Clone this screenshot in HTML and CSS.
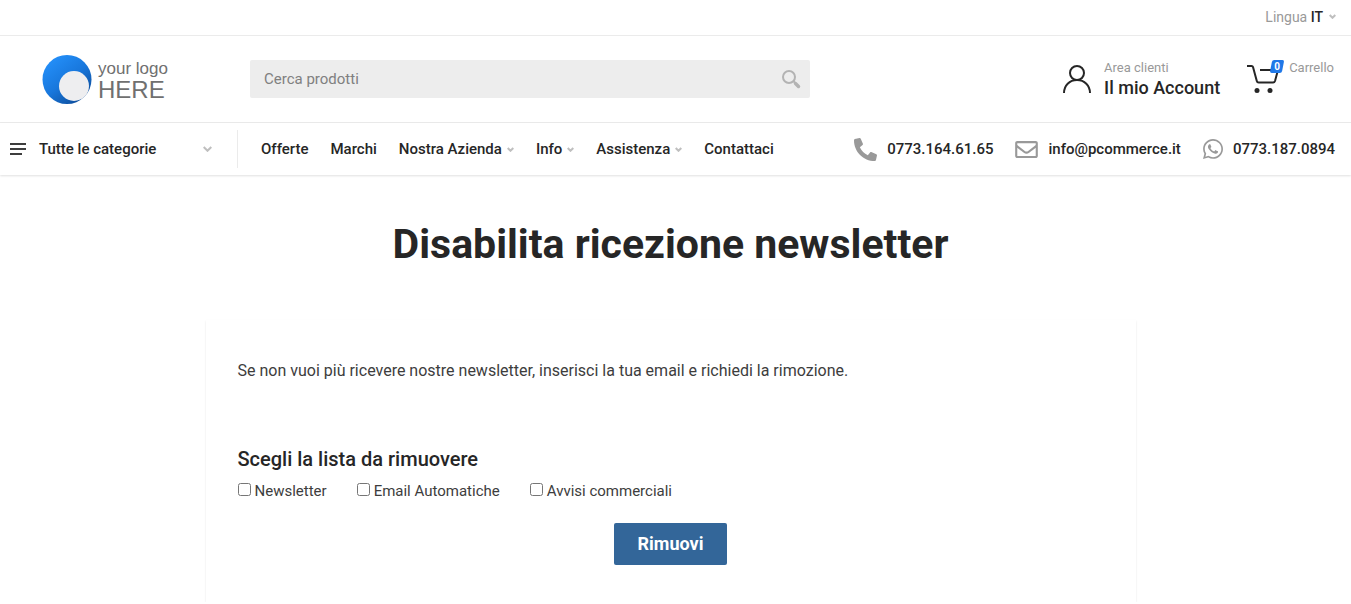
FILE: index.html
```html
<!DOCTYPE html>
<html lang="it">

<head>
    <meta charset="UTF-8" />
    <meta name="viewport" content="width=device-width, initial-scale=1.0" />
    <title>Disabilita ricezione newsletter</title>
    <link rel="stylesheet" href="styles.css">
</head>

<body>
    <header>
        <div class="topbar">
            <button type="button" class="language">
                <span>Lingua <b>IT</b></span>
                <svg class="arrow" viewBox="0 0 7 5" width="7" height="5"><path d="M.7 1l2.8 2.8L6.3 1" /></svg>
            </button>
        </div>

        <div class="header">
            <a href="#" class="logo">
                <svg viewBox="0 0 50 50" width="50" height="50">
                    <defs>
                        <linearGradient id="logoBlue" x1="0.1" y1="0.1" x2="0.8" y2="1">
                            <stop offset="0" stop-color="#2490fa" />
                            <stop offset="0.5" stop-color="#1877dc" />
                            <stop offset="1" stop-color="#0d4a96" />
                        </linearGradient>
                    </defs>
                    <circle cx="25" cy="25.500" r="24.500" fill="url(#logoBlue)" />
                    <circle cx="32" cy="32" r="15" fill="#eeeef0" />
                </svg>
                <span class="logo-text">
                    <span class="logo-small">your logo</span>
                    <span class="logo-big">HERE</span>
                </span>
            </a>

            <form class="search">
                <input type="text" placeholder="Cerca prodotti" aria-label="Cerca prodotti" />
                <button type="button" aria-label="Cerca">
                    <svg viewBox="0 0 20 20" width="20" height="20">
                        <circle cx="8" cy="8" r="6" fill="none" stroke="#b3b3b3" stroke-width="2" />
                        <path d="M12 12l2 1.500" stroke="#b3b3b3" stroke-width="2" />
                        <path d="M14.500 14.500l3 3" stroke="#b3b3b3" stroke-width="3.500" stroke-linecap="round" />
                    </svg>
                </button>
            </form>

            <a href="#" class="account">
                <svg viewBox="0 0 28 28" width="28" height="28" fill="none" stroke="#262626" stroke-width="2">
                    <circle cx="14" cy="8" r="7" />
                    <path d="M1 28c0-7.500 5.500-13 13-13s13 5.500 13 13" />
                </svg>
                <span class="account-text">
                    <span class="muted">Area clienti</span>
                    <span class="account-title">Il mio Account</span>
                </span>
            </a>

            <a href="#" class="cart">
                <span class="cart-icon">
                    <svg viewBox="0 0 32 28" width="32" height="28">
                        <path d="M0 1h4.500q1.200 0 1.500 1l3.800 14q.4 1.500 1.800 1.500h14.500q1.400 0 1.900-1.500L31 5H13" fill="none" stroke="#262626" stroke-width="2" stroke-linejoin="round" />
                        <circle cx="10" cy="25.500" r="2.500" fill="#262626" />
                        <circle cx="23" cy="25.500" r="2.500" fill="#262626" />
                    </svg>
                    <span class="badge">0</span>
                </span>
                <span class="muted">Carrello</span>
            </a>
        </div>

        <div class="navbar">
            <button type="button" class="categories">
                <svg viewBox="0 0 16 12" width="16" height="12" fill="#3d3d3d">
                    <path d="M0 0h16v2H0zM0 5h16v2H0zM0 10h12v2H0z" />
                </svg>
                <span>Tutte le categorie</span>
                <svg class="arrow" viewBox="0 0 9 6" width="9" height="6"><path d="M.7 1l3.800 3.800L8.300 1" /></svg>
            </button>

            <nav class="menu">
                <a href="#">Offerte</a>
                <a href="#">Marchi</a>
                <a href="#">Nostra Azienda <svg class="arrow" viewBox="0 0 7 5" width="7" height="5"><path d="M.7 1l2.800 2.800L6.300 1" /></svg></a>
                <a href="#">Info <svg class="arrow" viewBox="0 0 7 5" width="7" height="5"><path d="M.7 1l2.800 2.800L6.300 1" /></svg></a>
                <a href="#">Assistenza <svg class="arrow" viewBox="0 0 7 5" width="7" height="5"><path d="M.7 1l2.800 2.800L6.300 1" /></svg></a>
                <a href="#">Contattaci</a>
            </nav>

            <div class="contacts">
                <a href="tel:07731646165">
                    <svg viewBox="0 0 512 512" width="23" height="23" fill="#999">
                        <path transform="matrix(-1 0 0 1 512 0)" d="M493.400 24.600l-104-24c-11.300-2.600-22.900 3.300-27.500 13.900l-48 112c-4.200 9.800-1.400 21.300 6.900 28l60.600 49.600c-36 76.700-98.900 140.500-177.200 177.200l-49.600-60.600c-6.800-8.300-18.200-11.100-28-6.900l-112 48C3.900 366.500-2 378.100.6 389.400l24 104C27.100 504.200 36.700 512 48 512c256.100 0 464-207.500 464-464 0-11.200-7.700-20.900-18.600-23.400z" />
                    </svg>
                    0773.164.61.65
                </a>
                <a href="mailto:info@pcommerce.it">
                    <svg viewBox="0 64 512 384" width="23" height="17" fill="#999">
                        <path d="M464 64H48C21.490 64 0 85.490 0 112v288c0 26.510 21.490 48 48 48h416c26.510 0 48-21.490 48-48V112c0-26.510-21.490-48-48-48zm0 48v40.805c-22.422 18.259-58.168 46.651-134.587 106.490-16.841 13.247-50.201 45.072-73.413 44.701-23.208.375-56.579-31.459-73.413-44.701C106.180 199.465 70.425 171.067 48 152.805V112h416zM48 400V214.398c22.914 18.251 55.409 43.862 104.938 82.646 21.857 17.205 60.134 55.186 103.062 54.955 42.717.231 80.509-37.199 103.053-54.947 49.528-38.783 82.032-64.401 104.947-82.653V400H48z" />
                    </svg>
                    info@pcommerce.it
                </a>
                <a href="tel:07731870894">
                    <svg viewBox="0 32 448 448" width="20" height="20" fill="#999">
                        <path d="M380.900 97.100C339 55.100 283.200 32 223.900 32c-122.400 0-222 99.600-222 222 0 39.100 10.200 77.300 29.600 111L0 480l117.700-30.900c32.400 17.700 68.900 27 106.100 27h.1c122.300 0 224.100-99.600 224.100-222 0-59.300-25.200-115-67.100-157zm-157 341.600c-33.200 0-65.700-8.900-94-25.700l-6.700-4-69.800 18.300L72 359.200l-4.400-7c-18.500-29.400-28.200-63.300-28.200-98.200 0-101.700 82.800-184.500 184.600-184.500 49.300 0 95.600 19.200 130.400 54.100 34.800 34.900 56.200 81.200 56.100 130.500 0 101.800-84.900 184.600-186.600 184.600zm101.200-138.200c-5.500-2.800-32.800-16.200-37.900-18-5.100-1.900-8.800-2.800-12.500 2.800-3.700 5.600-14.300 18-17.600 21.800-3.200 3.700-6.500 4.200-12 1.400-32.600-16.300-54-29.100-75.500-66-5.700-9.800 5.700-9.100 16.300-30.300 1.800-3.700.9-6.900-.5-9.700-1.400-2.800-12.500-30.100-17.100-41.200-4.500-10.800-9.100-9.300-12.500-9.500-3.200-.2-6.900-.2-10.600-.2-3.700 0-9.700 1.400-14.800 6.900-5.100 5.600-19.400 19-19.400 46.300 0 27.300 19.900 53.700 22.600 57.400 2.800 3.700 39.100 59.700 94.800 83.800 35.200 15.200 49 16.500 66.600 13.900 10.700-1.600 32.800-13.400 37.400-26.400 4.600-13 4.600-24.100 3.200-26.400-1.300-2.500-5-3.900-10.500-6.600z" />
                    </svg>
                    0773.187.0894
                </a>
            </div>
        </div>
    </header>

    <main>
        <h1>Disabilita ricezione newsletter</h1>

        <form class="card">
            <p>Se non vuoi più ricevere nostre newsletter, inserisci la tua email e richiedi la rimozione.</p>
            <h2>Scegli la lista da rimuovere</h2>
            <div class="lists">
                <label><input type="checkbox" name="newsletter" />Newsletter</label>
                <label><input type="checkbox" name="automatiche" />Email Automatiche</label>
                <label><input type="checkbox" name="commerciali" />Avvisi commerciali</label>
            </div>
            <button type="button" class="remove">Rimuovi</button>
        </form>
    </main>
</body>

</html>
```

FILE: styles.css
```css
:root {
    --primary: #336699;
    --badge: #1f78e8;
    --text: #262626;
    --muted: #999;
    --border: #ebebeb;
}

* {
    box-sizing: border-box;
}

body {
    margin: 0;
    font-family: Roboto, sans-serif;
    font-size: 16px;
    background: white;
    color: #3d3d3d;
}

a {
    color: inherit;
    text-decoration: none;
}

button {
    padding: 0;
    border: none;
    background: none;
    font-family: inherit;
    color: inherit;
    cursor: pointer;
}

svg {
    flex-shrink: 0;
}

.arrow {
    fill: none;
    stroke: #bfbfbf;
    stroke-width: 2;
}

.muted {
    font-size: 13px;
    line-height: 16px;
    color: var(--muted);
}

/* top bar */
.topbar {
    display: flex;
    justify-content: flex-end;
    height: 36px;
    padding: 0 15px 2px;
    border-bottom: 1px solid var(--border);
}

.language {
    display: flex;
    align-items: center;
    gap: 6px;
    font-size: 14px;
    color: var(--muted);
}

.language b {
    font-weight: 500;
    color: var(--text);
}

/* header */
.header {
    display: flex;
    align-items: center;
    height: 87px;
    padding: 0 17px 0 42px;
    border-bottom: 1px solid var(--border);
}

.logo {
    display: flex;
    align-items: center;
    gap: 6px;
    width: 208px;
    font-family: "Liberation Sans", sans-serif;
    color: #707070;
}

.logo-text,
.account-text {
    display: flex;
    flex-direction: column;
}

.logo-text {
    padding-top: 2px;
}

.logo-small {
    font-size: 17px;
    line-height: 20px;
}

.logo-big {
    font-size: 24px;
    line-height: 22px;
}

.search {
    display: flex;
    align-items: center;
    width: 560px;
    height: 38px;
    padding: 0 9px 0 14px;
    border-radius: 2px;
    background: #ededed;
}

.search input {
    flex: 1;
    padding: 0;
    border: none;
    outline: none;
    background: none;
    font-family: inherit;
    font-size: 15px;
}

.search input::placeholder {
    color: #808080;
}

.search button {
    display: flex;
}

.account {
    display: flex;
    align-items: center;
    gap: 13px;
    margin-left: auto;
}

.account-text {
    gap: 1px;
}

.account-title {
    font-size: 18px;
    font-weight: 500;
    line-height: 22px;
    color: var(--text);
}

.cart {
    display: flex;
    gap: 10px;
    margin-left: 27px;
    padding-bottom: 6px;
}

.cart-icon {
    position: relative;
    display: flex;
    padding-top: 5px;
}

.badge {
    position: absolute;
    top: 0;
    right: -4px;
    width: 12px;
    height: 13px;
    color: white;
    font-size: 10px;
    font-weight: 700;
    line-height: 13px;
    text-align: center;
}

.badge::before {
    content: "";
    position: absolute;
    inset: 0;
    z-index: -1;
    border-radius: 2px;
    background: var(--badge);
    transform: skewX(-11deg);
}

.cart-icon .badge {
    z-index: 1;
}

/* navigation */
.navbar {
    display: flex;
    align-items: center;
    height: 52px;
    padding: 0 16px 0 10px;
    box-shadow: 0 1px 2px rgba(0, 0, 0, 0.12);
    font-size: 15px;
    font-weight: 500;
    color: var(--text);
}

.categories {
    display: flex;
    align-items: center;
    gap: 13px;
    width: 228px;
    height: 38px;
    padding-right: 25px;
    border-right: 1px solid var(--border);
    font-size: 15px;
    font-weight: 500;
}

.categories .arrow {
    margin-left: auto;
}

.menu {
    display: flex;
    gap: 22px;
    margin-left: 23px;
}

.menu a,
.contacts a {
    display: flex;
    align-items: center;
}

.menu a {
    gap: 5px;
}

.contacts {
    display: flex;
    gap: 22px;
    margin-left: auto;
}

.contacts a {
    gap: 10px;
}

/* content */
main {
    padding: 0 10px 0 0;
}

h1 {
    margin: 45px 0 52px;
    font-size: 41px;
    font-weight: 700;
    line-height: 48px;
    text-align: center;
    color: var(--text);
}

.card {
    display: flex;
    flex-direction: column;
    max-width: 930px;
    margin: 0 auto;
    padding: 39px 32px 37px;
    box-shadow: 0 1px 2px rgba(0, 0, 0, 0.1);
}

.card p {
    margin: 0 0 63px;
    line-height: 24px;
}

h2 {
    margin: 0 0 8px;
    font-size: 20px;
    font-weight: 500;
    line-height: 26px;
    color: var(--text);
}

.lists {
    display: flex;
    flex-wrap: wrap;
    gap: 30px;
    margin-bottom: 21px;
    font-size: 15px;
    line-height: 22px;
}

.lists input {
    width: 13px;
    height: 13px;
    margin: 0 4px 0 0;
}

.remove {
    align-self: center;
    height: 42px;
    padding: 0 24px 1px;
    border-radius: 2px;
    background: var(--primary);
    color: white;
    font-size: 18px;
    font-weight: 700;
}

@media (max-width: 1100px) {
    .header,
    .navbar {
        flex-wrap: wrap;
        gap: 12px;
        height: auto;
        padding: 12px;
    }
}
```
